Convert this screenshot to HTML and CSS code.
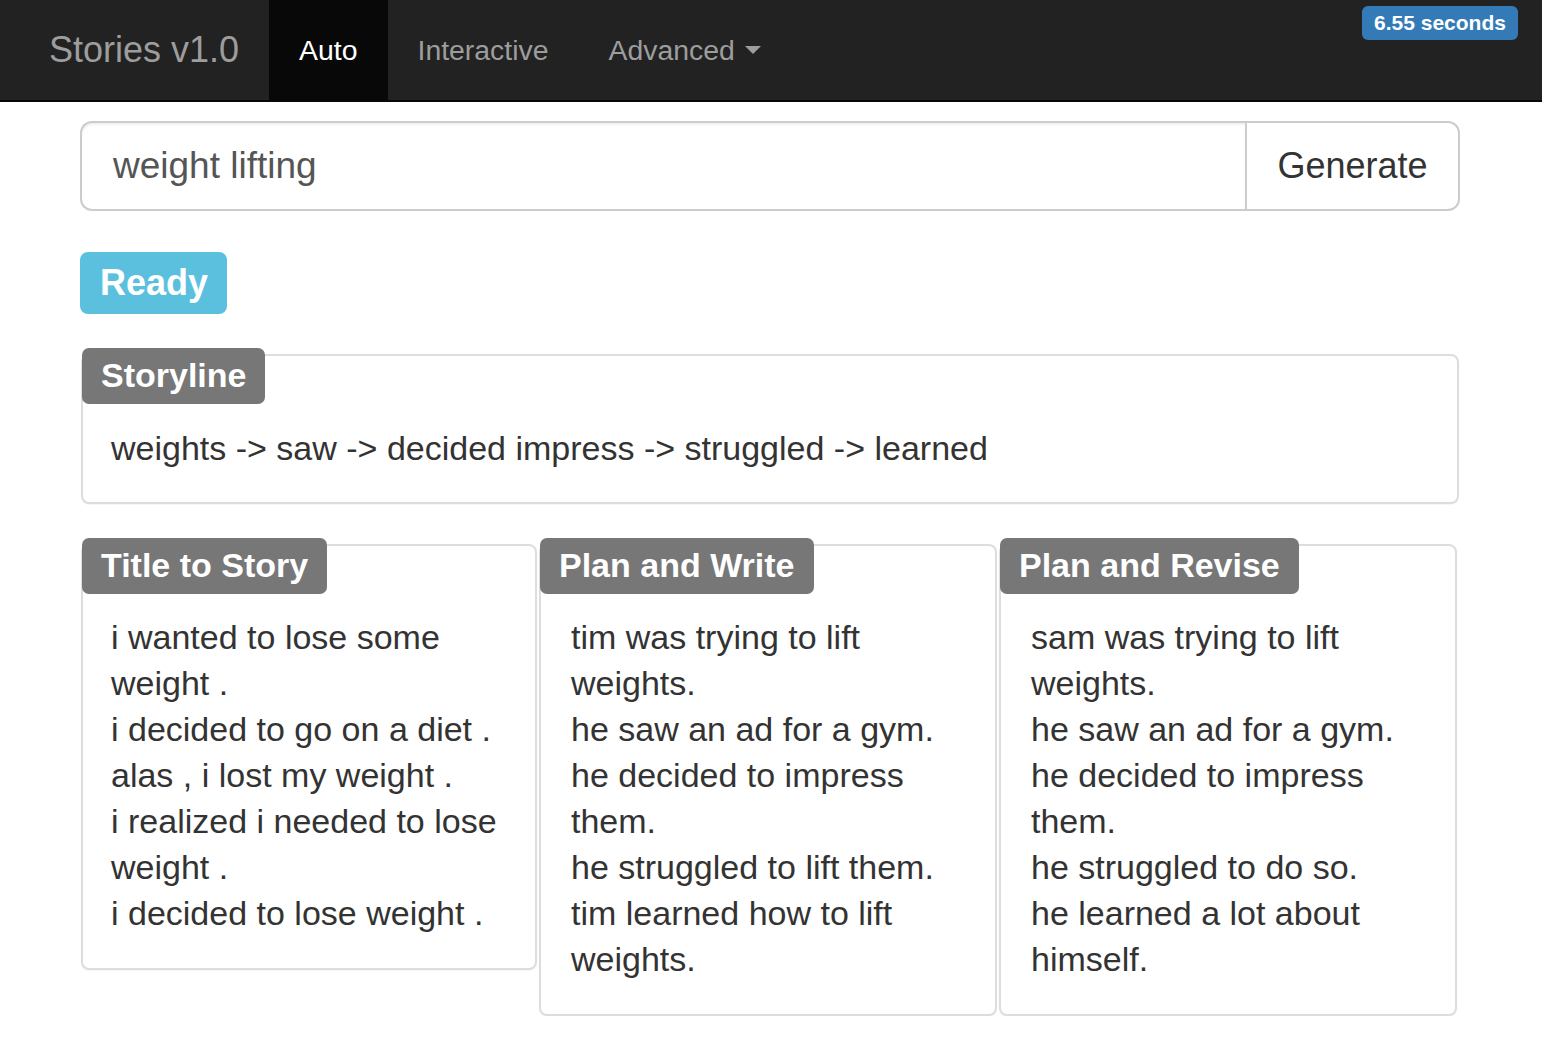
FILE: index.html
```html
<!DOCTYPE html>
<html>
<head>
<meta charset="utf-8">
<title>Stories v1.0</title>
<link rel="stylesheet" href="styles.css">
</head>
<body>
<nav class="navbar">
  <a class="brand">Stories v1.0</a>
  <ul class="nav">
    <li class="active"><a>Auto</a></li>
    <li><a>Interactive</a></li>
    <li><a>Advanced <span class="caret"></span></a></li>
  </ul>
  <span class="timer">6.55 seconds</span>
</nav>
<main class="container">
  <div class="input-group">
    <div class="input">weight lifting</div>
    <button class="btn">Generate</button>
  </div>
  <div class="status"><span class="ready">Ready</span></div>
  <section class="panel storyline">
    <span class="tag">Storyline</span>
    <p>weights -&gt; saw -&gt; decided impress -&gt; struggled -&gt; learned</p>
  </section>
  <div class="columns">
    <section class="panel">
      <span class="tag">Title to Story</span>
      <p>i wanted to lose some weight .<br>i decided to go on a diet .<br>alas , i lost my weight .<br>i realized i needed to lose weight .<br>i decided to lose weight .</p>
    </section>
    <section class="panel">
      <span class="tag">Plan and Write</span>
      <p>tim was trying to lift weights.<br>he saw an ad for a gym.<br>he decided to impress them.<br>he struggled to lift them.<br>tim learned how to lift weights.</p>
    </section>
    <section class="panel">
      <span class="tag">Plan and Revise</span>
      <p>sam was trying to lift weights.<br>he saw an ad for a gym.<br>he decided to impress them.<br>he struggled to do so.<br>he learned a lot about himself.</p>
    </section>
  </div>
</main>
</body>
</html>
```

FILE: styles.css
```css
* { box-sizing: border-box; }
body {
  margin: 0;
  font-family: "Liberation Sans", Arial, sans-serif;
  color: #333;
  background: #fff;
}
.navbar {
  position: relative;
  display: flex;
  align-items: stretch;
  height: 102px;
  background: #222;
  border-bottom: 2px solid #080808;
}
.brand {
  display: flex;
  align-items: center;
  padding: 0 30px 0 49px;
  font-size: 36px;
  color: #9d9d9d;
}
.nav {
  display: flex;
  margin: 0;
  padding: 0;
  list-style: none;
}
.nav li { display: flex; }
.nav a {
  display: flex;
  align-items: center;
  padding: 0 30px;
  font-size: 28.4px;
  color: #9d9d9d;
}
.nav li.active a {
  background: #080808;
  color: #fff;
}
.caret {
  display: inline-block;
  width: 0;
  height: 0;
  margin-left: 10px;
  border-top: 8px solid #9d9d9d;
  border-left: 8px solid transparent;
  border-right: 8px solid transparent;
}
.timer {
  position: absolute;
  top: 6px;
  left: 1362px;
  height: 34px;
  padding: 0 12px;
  line-height: 34px;
  font-size: 21px;
  font-weight: bold;
  color: #fff;
  background: #337ab7;
  border-radius: 6px;
}
.container {
  width: 1380px;
  margin-left: 80px;
  padding-top: 19px;
}
.input-group {
  display: flex;
  height: 90px;
}
.input {
  flex: 1;
  display: flex;
  align-items: center;
  padding: 0 30px 0 31px;
  font-size: 37px;
  color: #555;
  border: 2px solid #ccc;
  border-right: 0;
  border-radius: 12px 0 0 12px;
  box-shadow: inset 0 2px 2px rgba(0,0,0,0.06);
}
.btn {
  width: 215px;
  font-family: inherit;
  font-size: 36px;
  color: #333;
  background: #fff;
  border: 2px solid #ccc;
  border-radius: 0 12px 12px 0;
  padding: 0;
}
.status {
  margin-top: 41px;
  height: 62px;
}
.ready {
  display: inline-block;
  height: 62px;
  padding: 0 19px 0 20px;
  line-height: 62px;
  font-size: 36px;
  font-weight: bold;
  color: #fff;
  background: #5bc0de;
  border-radius: 8px;
}
.panel {
  position: relative;
  border: 2px solid #ddd;
  border-radius: 8px;
  padding: 68px 30px 32px 28px;
  box-shadow: 0 1px 1px rgba(0,0,0,0.04);
  background: #fff;
}
.columns .panel + .panel {
  padding-left: 30px;
}
.panel p {
  margin: 0;
  font-size: 34px;
  line-height: 46px;
}
.tag {
  position: absolute;
  top: -8px;
  left: -1px;
  height: 56px;
  padding: 0 19px 0 19px;
  line-height: 54px;
  font-size: 34px;
  font-weight: bold;
  color: #fff;
  background: #777;
  border-radius: 7px;
}
.storyline {
  margin: 40px 1px 0 1px;
  padding-top: 69px;
  padding-bottom: 31px;
}
.columns {
  display: grid;
  grid-template-columns: 456px 458px 458px;
  gap: 2px;
  align-items: start;
  margin: 40px 0 0 1px;
}
```
